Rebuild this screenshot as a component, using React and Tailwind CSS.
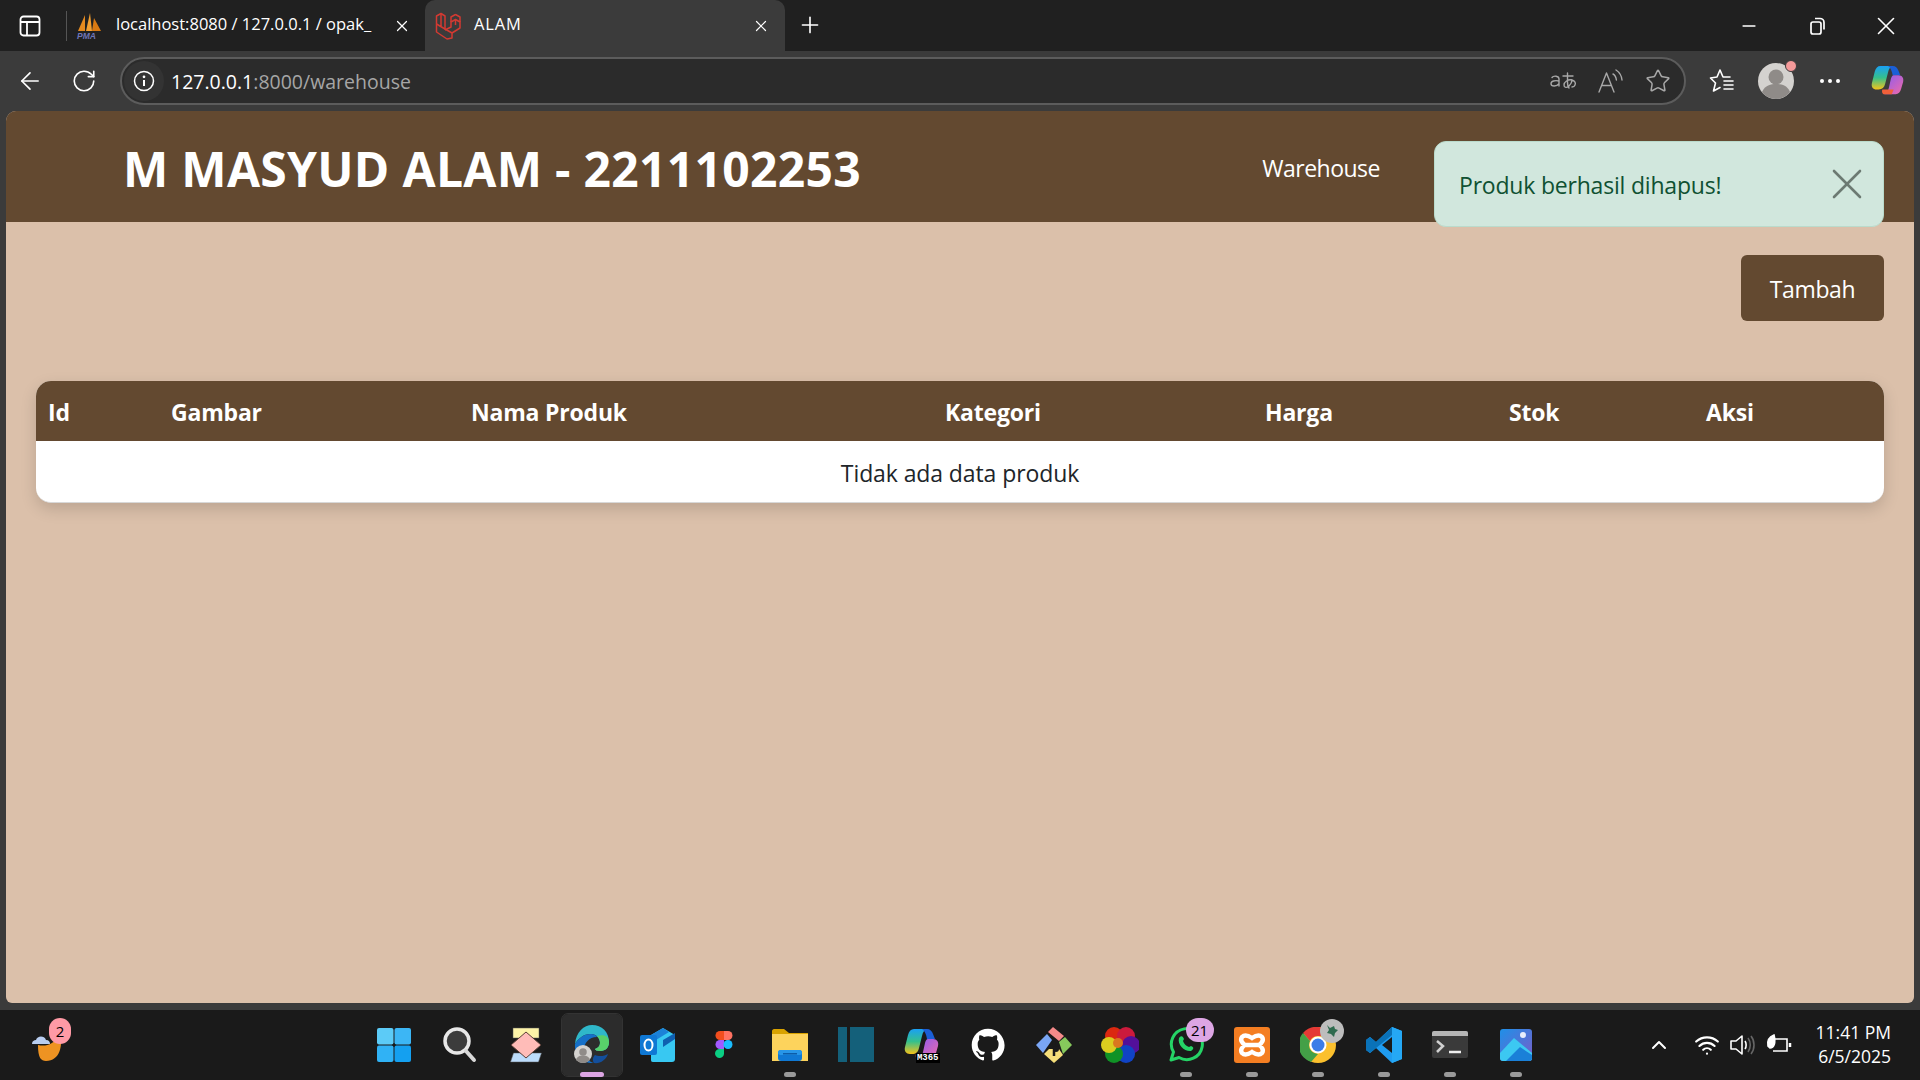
import React from 'react';
import { X, Plus, ArrowLeft, RotateCw, Star, Minus, ChevronUp, Wifi } from 'lucide-react';

const FONT = 'font-["Open_Sans","Noto_Sans",sans-serif]';

const columns = [
    { label: 'Id', width: 'w-[123px]' },
    { label: 'Gambar', width: 'w-[300px]' },
    { label: 'Nama Produk', width: 'w-[474px]' },
    { label: 'Kategori', width: 'w-[320px]' },
    { label: 'Harga', width: 'w-[244px]' },
    { label: 'Stok', width: 'w-[197px]' },
    { label: 'Aksi', width: 'w-[190px]' },
];

const PanelIcon = () => (
    <svg width="22" height="22" viewBox="0 0 22 22" fill="none" stroke="#fff" strokeWidth="1.8">
        <rect x="1.5" y="1.5" width="19" height="19" rx="3" />
        <path d="M1.5 7h19M8 7v13.5" />
    </svg>
);

const PmaIcon = () => (
    <svg width="26" height="28" viewBox="0 0 26 28">
        <path d="M2 19 L9 3 L9 19Z" fill="#e58a1f" />
        <path d="M10 19 L14 1 L16 19Z" fill="#f3a032" />
        <path d="M16 19 L18 6 L25 19Z" fill="#d97a12" />
        <text x="1" y="27" fontSize="8.5" fontWeight="700" fontStyle="italic" fill="#6f75b8" fontFamily="Liberation Sans">PMA</text>
    </svg>
);

const LaravelIcon = () => (
    <svg width="26" height="28" viewBox="0 0 26 28" fill="none" stroke="#d33a32" strokeWidth="1.5" strokeLinejoin="round">
        <path d="M1.5 4 L6 1.5 L10 4 V17 L17 21 V26 L12 27 L1.5 20Z" />
        <path d="M10 17 L1.5 12 M6 1.5 V15 M17 21 L25 16 V10 L20.5 7.5 L16 10 V15 L10 18" />
        <path d="M20.5 2.5 L25 5 V10 M20.5 2.5 L16 5 V10 M20.5 7.5 V13" />
    </svg>
);

const TranslateIcon = () => (
    <svg width="28" height="24" viewBox="0 0 28 24" fill="none" stroke="#a8a8a8" strokeWidth="1.4" strokeLinecap="round">
        <path d="M3 8.5c1.5-2 7-2 7 1.5v7M10 12c-4-1-8 0-8 2.7 0 3 6 3 8 0" />
        <path d="M14 7h10M18.5 4v9c0 3 .5 5 1.5 6M23 11c-4-1-8 2-8 5 0 3 3 3 5 1 2-2 3-4 3-6 3 1 4 3 3 5-.5 1.5-2 2-3 2" />
    </svg>
);

const ReadAloudIcon = () => (
    <svg width="28" height="26" viewBox="0 0 28 26" fill="none" stroke="#a8a8a8" strokeWidth="1.4" strokeLinecap="round" strokeLinejoin="round">
        <path d="M2 24 L9.5 5 L17 24M4.8 17.5h9.4" />
        <path d="M16 6c2 1 3 3 3.4 6M19 2c3 2 5.5 5 6 10" />
    </svg>
);

const FavoritesIcon = () => (
    <svg width="26" height="26" viewBox="0 0 26 26" fill="none" stroke="#fff" strokeWidth="1.6" strokeLinejoin="round" strokeLinecap="round">
        <path d="M11 2 L14 9 H21 M11 2 L8 9 L1.5 10 L6.5 15 L4.5 23 L11 19.5" />
        <path d="M15 13h9M15 17h9M15 21h9" />
    </svg>
);

const Avatar = ({ size = 36 }) => (
    <svg width={size} height={size} viewBox="0 0 36 36">
        <circle cx="18" cy="18" r="18" fill="#d4d2cf" />
        <circle cx="18" cy="14" r="7.5" fill="#8f8b88" />
        <path d="M4 29c3-7 9-8 14-8s11 1 14 8c-3 4-8 7-14 7S7 33 4 29Z" fill="#8f8b88" />
    </svg>
);

const CopilotIcon = ({ size = 36, id = 'cp' }) => (
    <svg width={size} height={size} viewBox="0 0 36 36">
        <defs>
            <linearGradient id={`${id}a`} x1="0" y1="0" x2="0" y2="1">
                <stop offset="0" stopColor="#1aa0f5" />
                <stop offset="0.5" stopColor="#35c08c" />
                <stop offset="1" stopColor="#f5c21a" />
            </linearGradient>
            <linearGradient id={`${id}b`} x1="0" y1="0" x2="1" y2="1">
                <stop offset="0" stopColor="#8a5cf0" />
                <stop offset="1" stopColor="#f06aa8" />
            </linearGradient>
        </defs>
        <path d="M10 2h13c-3 1-4 3-5 7l-3 12c-1 4-3 6-7 6H6c-4 0-6-3-5-7l3-12C5 4 7 2 10 2Z" fill={`url(#${id}a)`} />
        <path d="M18 2h5c3 0 5 2 6 5l2 5h-8c-1-5-2-8-5-10Z" fill="#1b5fd6" />
        <path d="M24 12h5c4 0 6 3 5 7l-2 7c-1 4-3 6-6 6H14c3-1 4-3 5-7l2-9c.5-2 1.500-4 3-4Z" fill={`url(#${id}b)`} />
        <path d="M12 27h12l-2 5H14c-1.500 0-3-2-2-5Z" fill="#f0603a" />
    </svg>
);

const WeatherIcon = () => (
    <svg width="38" height="38" viewBox="0 0 38 38">
        <path d="M8 20c8 2 16-1 22-10 3 10 0 26-14 26-5 0-8-3-8-16Z" fill="#ee9322" transform="translate(0 1)" />
        <path d="M2 20c0-3 2-4 4-4 1-4 8-5 10 0 3 0 4 2 4 4Z" fill="#b8cdf0" />
    </svg>
);

const StartIcon = () => (
    <svg width="36" height="36" viewBox="0 0 36 36">
        <rect x="1" y="1" width="16.500" height="16.500" rx="2" fill="#5ccbf7" />
        <rect x="18.500" y="1" width="16.500" height="16.500" rx="2" fill="#3cb6f5" />
        <rect x="1" y="18.500" width="16.500" height="16.500" rx="2" fill="#30b2f5" />
        <rect x="18.500" y="18.500" width="16.500" height="16.500" rx="2" fill="#14a0f0" />
    </svg>
);

const SearchIcon = () => (
    <svg width="36" height="38" viewBox="0 0 36 38" fill="none">
        <circle cx="15" cy="15" r="12" fill="#3c3c3c" stroke="#e8e8e8" strokeWidth="3.500" />
        <path d="M24 25 L32 34" stroke="#d8d8d8" strokeWidth="4" strokeLinecap="round" />
    </svg>
);

const WidgetsIcon = () => (
    <svg width="34" height="36" viewBox="0 0 34 36">
        <rect x="4" y="1" width="26" height="10" fill="#fdf3a8" stroke="#555" strokeWidth="0.500" />
        <path d="M3 27h28l-3 9H0Z" fill="#bcdcfb" stroke="#555" strokeWidth="0.500" transform="translate(1.500 -1)" />
        <path d="M17 5 L32 18 L17 31 L2 18Z" fill="#ffbcb8" stroke="#5a4038" strokeWidth="1" />
    </svg>
);

const EdgeIcon = () => (
    <div className="relative w-[36px] h-[42px]">
        <svg width="36" height="42" viewBox="0 0 36 42">
            <path d="M1 20C2 8 10 1 18 1c10 0 17 7 17 17 0 7-5 9-9 9-3 0-5-1-5-2 3-1 5-3 5-6 0-5-4-9-9-9-8 0-13 5-16 10Z" fill="#2fb7c9" />
            <path d="M35 18c0 7-5 9-9 9-3 0-5-1-5-2 3-1 5-3 5-6 0-3-1-5-3-7 8-2 12 1 12 6Z" fill="#58d06a" />
            <path d="M1 20c3-5 8-10 16-10 3 0 5 1 6 3-8 0-13 6-13 13 0 7 5 12 10 13C10 40 0 33 1 20Z" fill="#1670c8" />
            <path d="M20 39c6 1 12-3 14-9-3 2-9 3-13 1-2 2-3 5-1 8Z" fill="#134f9c" />
        </svg>
        <div className="absolute left-[0px] bottom-[3px]"><Avatar size={18} /></div>
    </div>
);

const OutlookIcon = () => (
    <svg width="38" height="36" viewBox="0 0 38 36">
        <path d="M12 8 L24 1 L36 8 V32c0 2-1 3-3 3H14c-2 0-2-1-2-3Z" fill="#38c8f2" />
        <path d="M12 8 L24 1 L30 5 L12 16Z" fill="#1c82d8" />
        <path d="M24 13 L36 6 V12 L24 20Z" fill="#0f5fb0" />
        <rect x="1" y="8" width="17" height="20" rx="2" fill="#0f78d4" />
        <ellipse cx="9.500" cy="18" rx="4" ry="5.500" fill="none" stroke="#fff" strokeWidth="2" />
    </svg>
);

const FigmaIcon = () => (
    <svg width="18" height="30" viewBox="0 0 18 30">
        <path d="M5 1h4v9H5a4.500 4.500 0 0 1 0-9Z" fill="#f24e1e" />
        <path d="M9 1h4a4.500 4.500 0 0 1 0 9H9Z" fill="#ff7262" />
        <path d="M5 10h4v9H5a4.500 4.500 0 0 1 0-9Z" fill="#a259ff" />
        <circle cx="13" cy="14.500" r="4.500" fill="#1abcfe" />
        <path d="M5 19h4v5a4.500 4.500 0 1 1-4-5Z" fill="#0acf83" />
    </svg>
);

const FolderIcon = () => (
    <svg width="36" height="34" viewBox="0 0 36 34">
        <path d="M0 3c0-1 1-2 2-2h10l5 4h19v6H0Z" fill="#d9a200" />
        <path d="M0 6h36v27H0Z" fill="#fdd35c" />
        <rect x="6" y="22" width="24" height="11" rx="3" fill="#0f78d4" />
        <rect x="6" y="22" width="24" height="5" rx="2.500" fill="#2796e8" />
        <rect x="11" y="25" width="14" height="1.500" fill="#0c5ca8" />
    </svg>
);

const PanelAppIcon = () => (
    <svg width="36" height="36" viewBox="0 0 36 36">
        <rect x="0" y="0" width="9" height="35" fill="#14607a" />
        <rect x="12" y="0" width="24" height="35" fill="#14607a" />
    </svg>
);

const M365Icon = () => (
    <div className="relative w-[36px] h-[36px]">
        <CopilotIcon size={36} id="m365" />
        <span className='absolute right-[0px] bottom-[0px] bg-black text-white text-[9px] leading-[10px] font-bold px-[1px] font-["Liberation_Mono",monospace]'>M365</span>
    </div>
);

const GithubIcon = () => (
    <svg width="34" height="34" viewBox="0 0 24 24" fill="#fff">
        <path d="M12 .5C5.650.5.500 5.650.500 12c0 5.100 3.300 9.400 7.900 10.900.6.100.8-.3.8-.6v-2c-3.200.7-3.900-1.500-3.900-1.500-.5-1.300-1.300-1.700-1.300-1.700-1-.7.100-.7.100-.7 1.200.1 1.800 1.200 1.800 1.200 1 1.800 2.700 1.300 3.400 1 .1-.8.400-1.300.7-1.600-2.600-.3-5.300-1.300-5.300-5.700 0-1.300.5-2.300 1.200-3.100-.1-.3-.5-1.500.1-3.100 0 0 1-.3 3.200 1.200a11 11 0 0 1 5.800 0c2.200-1.500 3.200-1.200 3.200-1.200.6 1.600.2 2.800.1 3.100.8.800 1.200 1.800 1.200 3.100 0 4.400-2.700 5.400-5.300 5.700.4.400.8 1.100.8 2.200v3.200c0 .3.200.7.800.6 4.600-1.500 7.900-5.800 7.900-10.900C23.500 5.650 18.350.5 12 .5Z" />
    </svg>
);

const GitKrakenIcon = () => (
    <svg width="38" height="38" viewBox="0 0 38 38">
        <path d="M13 6 L18 1 L29 10 L24 15Z" fill="#f58a8a" />
        <path d="M1 19 L12 8 L17 14 L8 27Z" fill="#7aa6f5" />
        <path d="M24 16 L30 11 L37 19 L28 28Z" fill="#86c95c" />
        <path d="M9 28 L14 23 L24 23 L28 29 L19 37Z" fill="#f5de7a" />
        <path d="M19 12 L19 30" stroke="#1a1a1a" strokeWidth="2.500" />
        <circle cx="21" cy="23" r="3" fill="#1a1a1a" />
    </svg>
);

const PhotosIcon = () => (
    <svg width="38" height="38" viewBox="0 0 38 38">
        <g opacity="0.9">
            <circle cx="13" cy="10" r="9" fill="#f02a10" />
            <circle cx="25" cy="10" r="9" fill="#e01a40" />
            <circle cx="30" cy="19" r="9" fill="#5a10a8" />
            <circle cx="25" cy="28" r="9" fill="#1048d8" />
            <circle cx="13" cy="28" r="9" fill="#10a028" />
            <circle cx="8" cy="19" r="8" fill="#f0e020" />
            <circle cx="17" cy="17" r="5" fill="#f08020" />
        </g>
    </svg>
);

const WhatsappIcon = () => (
    <div className="relative w-[36px] h-[36px]">
        <svg width="36" height="36" viewBox="0 0 36 36" fill="none">
            <path d="M3 33 L5.500 25A15.500 15.500 0 1 1 11 30.500Z" stroke="#25d366" strokeWidth="3" strokeLinejoin="round" />
            <path d="M11 11c2-3 4-2 5 1l-1 2c1 3 3 5 6 6l2-1c3 1 3 3 0 5-6 1-14-6-12-13Z" fill="#25d366" />
        </svg>
        <span className='absolute right-[-10px] top-[-9px] w-[28px] h-[24px] rounded-full bg-[#dda6e4] text-black text-[15px] leading-[24px] text-center font-["Open_Sans",sans-serif]'>21</span>
    </div>
);

const XamppIcon = () => (
    <div className="flex items-center justify-center w-[36px] h-[36px] rounded-[3px] bg-[#f47e22]">
        <svg width="30" height="26" viewBox="0 0 30 26" fill="none" stroke="#fff" strokeWidth="4.500">
            <path d="M5 5c3-3 7-1 10 1 3-2 7-4 10-1 2 3 0 6-3 8 3 2 5 5 3 8-3 3-7 1-10-1-3 2-7 4-10 1-2-3 0-6 3-8-3-2-5-5-3-8Z" />
            <path d="M9 13h12" />
        </svg>
    </div>
);

const ChromeIcon = () => (
    <div className="relative w-[36px] h-[36px]">
        <svg width="36" height="36" viewBox="0 0 36 36">
            <circle cx="18" cy="18" r="18" fill="#fbc02d" />
            <path d="M18 0a18 18 0 0 1 15.600 9H18a9 9 0 0 0-8 5L3 6a18 18 0 0 1 15-6Z" fill="#e53935" />
            <path d="M3 6 L10 14a9 9 0 0 0 8 13 L11 35A18 18 0 0 1 3 6Z" fill="#43a047" />
            <circle cx="18" cy="18" r="8.500" fill="#fff" />
            <circle cx="18" cy="18" r="6.500" fill="#3b7de8" />
        </svg>
        <div className="absolute right-[-8px] top-[-8px] w-[24px] h-[24px] rounded-full bg-[#bdbdbd] flex items-center justify-center">
            <svg width="14" height="14" viewBox="0 0 14 14"><path d="M2 1l3 3 4-2 1 3 3 1-3 3-1 4-3-3-4-1 2-3Z" fill="#2f6b4f" /></svg>
        </div>
    </div>
);

const VscodeIcon = () => (
    <svg width="36" height="36" viewBox="0 0 36 36">
        <path d="M26 0 L36 4 V32 L26 36 L10 21 L4 26 L0 23 V13 L4 10 L10 15Z M26 10 L16 18 L26 26Z" fill="#1f9cf0" fillRule="evenodd" />
        <path d="M26 0 L36 4 V32 L26 36Z M26 10 L26 26" fill="#25a8f5" />
        <path d="M26 0 L10 15 L4 10 L0 13 V23 L4 26 L26 8Z" fill="#0a72b8" />
    </svg>
);

const TerminalIcon = () => (
    <svg width="36" height="28" viewBox="0 0 36 28" fill="none">
        <rect x="0" y="0" width="36" height="27" rx="2" fill="#3a3a3a" />
        <path d="M2 0h32a2 2 0 0 1 2 2v3H0V2a2 2 0 0 1 2-2Z" fill="#b5b5b5" />
        <path d="M5 10 L11 15 L5 21" stroke="#d0d0d0" strokeWidth="2.500" />
        <path d="M17 21h12" stroke="#eee" strokeWidth="2.500" />
    </svg>
);

const GalleryIcon = () => (
    <svg width="32" height="32" viewBox="0 0 32 32">
        <defs>
            <linearGradient id="gal" x1="0" y1="0" x2="1" y2="1">
                <stop offset="0" stopColor="#1e90e8" />
                <stop offset="1" stopColor="#7a5cc8" />
            </linearGradient>
        </defs>
        <rect width="32" height="32" rx="3" fill="url(#gal)" />
        <circle cx="23" cy="6" r="3" fill="#e8eefc" />
        <path d="M0 24 L14 9 L32 24 V29a3 3 0 0 1-3 3H3a3 3 0 0 1-3-3Z" fill="#3cc8f2" />
        <path d="M6 32 L20 18 L32 26 V29a3 3 0 0 1-3 3Z" fill="#1a80d8" />
    </svg>
);

const taskbarApps = [
    { key: 'start', icon: <StartIcon /> },
    { key: 'search', icon: <SearchIcon /> },
    { key: 'widgets', icon: <WidgetsIcon /> },
    { key: 'edge', icon: <EdgeIcon />, active: true },
    { key: 'outlook', icon: <OutlookIcon /> },
    { key: 'figma', icon: <FigmaIcon /> },
    { key: 'folder', icon: <FolderIcon />, open: true },
    { key: 'panel', icon: <PanelAppIcon /> },
    { key: 'm365', icon: <M365Icon /> },
    { key: 'github', icon: <GithubIcon /> },
    { key: 'gitkraken', icon: <GitKrakenIcon /> },
    { key: 'photos', icon: <PhotosIcon /> },
    { key: 'whatsapp', icon: <WhatsappIcon />, open: true },
    { key: 'xampp', icon: <XamppIcon />, open: true },
    { key: 'chrome', icon: <ChromeIcon />, open: true },
    { key: 'vscode', icon: <VscodeIcon />, open: true },
    { key: 'terminal', icon: <TerminalIcon />, open: true },
    { key: 'gallery', icon: <GalleryIcon />, open: true },
];

const TabBar = () => (
    <div className="flex items-end h-[51px] bg-[#202020] text-white text-[16.500px]">
        <div className="flex items-center w-[66px] h-[51px] pl-[19px]"><PanelIcon /></div>
        <div className="self-center w-px h-[30px] bg-[#555]" />
        <div className="flex items-center w-[358px] h-[51px] pl-[9px]">
            <PmaIcon />
            <span className="ml-[14px] -mt-[2px] w-[263px] whitespace-nowrap">localhost:8080 / 127.0.0.1 / opak_</span>
            <X className="ml-[14px] w-[18px] h-[18px]" strokeWidth={1.6} />
        </div>
        <div className="flex items-center w-[360px] h-[51px] pl-[10px] pr-[15px] bg-[#3b3b3b] rounded-t-[10px]">
            <LaravelIcon />
            <span className="ml-[13px] -mt-[2px] tracking-[0.8px]">ALAM</span>
            <X className="ml-auto w-[18px] h-[18px]" strokeWidth={1.6} />
        </div>
        <div className="flex items-center justify-center w-[50px] h-[51px] pb-[2px]"><Plus className="w-[26px] h-[26px]" strokeWidth={1.5} /></div>
        <div className="flex items-center ml-auto h-[51px]">
            <div className="flex items-center justify-center w-[69px]"><Minus className="w-[20px] h-[20px]" strokeWidth={2} /></div>
            <div className="flex items-center justify-center w-[69px]">
                <svg width="18" height="20" viewBox="0 0 18 20" fill="none" stroke="#fff" strokeWidth="1.700">
                    <rect x="2" y="6" width="10" height="12" rx="2" />
                    <path d="M6 2.500h5a4 4 0 0 1 4 4v7" />
                </svg>
            </div>
            <div className="flex items-center justify-center w-[68px]"><X className="w-[30px] h-[30px]" strokeWidth={1.3} /></div>
        </div>
    </div>
);

const Toolbar = () => (
    <div className="flex items-center h-[60px] bg-[#3b3b3b] text-white">
        <div className="flex items-center justify-center w-[60px]"><ArrowLeft className="w-[28px] h-[28px]" strokeWidth={1.4} /></div>
        <div className="flex items-center justify-center w-[48px]"><RotateCw className="w-[26px] h-[26px]" strokeWidth={1.5} /></div>
        <div className="flex items-center ml-[12px] w-[1566px] h-[48px] rounded-full border-2 border-[#5c5c5c] bg-[#2b2b2b] pl-[2px] pr-[13px]">
            <div className="flex items-center justify-center w-[40px] h-[40px] rounded-full bg-[#333333]">
                <svg width="22" height="22" viewBox="0 0 22 22" fill="none" stroke="#fff" strokeWidth="1.500">
                    <circle cx="11" cy="11" r="9.500" />
                    <path d="M11 10v6" strokeWidth="2" />
                    <circle cx="11" cy="6.800" r="0.600" fill="#fff" />
                </svg>
            </div>
            <span className="ml-[7px] mt-[1px] text-[19.500px] text-white">127.0.0.1<span className="text-[#a6a6a6]">:8000/warehouse</span></span>
            <div className="flex items-center ml-auto gap-[20px]">
                <TranslateIcon />
                <ReadAloudIcon />
                <Star className="w-[26px] h-[26px] text-[#a8a8a8]" strokeWidth={1.4} />
            </div>
        </div>
        <div className="flex items-center justify-center ml-[19px] w-[34px]"><FavoritesIcon /></div>
        <div className="relative ml-[19px] w-[36px] h-[36px]">
            <Avatar />
            <span className="absolute right-[-3px] top-[-3px] w-[12px] h-[12px] rounded-full bg-[#f59a9a] border border-[#3b3b3b]" />
        </div>
        <div className="flex items-center justify-center gap-[4px] ml-[26px] w-[20px]">
            <span className="w-[4px] h-[4px] shrink-0 rounded-full bg-white" />
            <span className="w-[4px] h-[4px] shrink-0 rounded-full bg-white" />
            <span className="w-[4px] h-[4px] shrink-0 rounded-full bg-white" />
        </div>
        <div className="ml-[31px]"><CopilotIcon size={34} /></div>
    </div>
);

const WarehousePage = () => (
    <div className="relative flex-1 mx-[6px] rounded-t-[10px] rounded-b-[6px] overflow-hidden bg-[#dbc0aa]">
        <nav className="flex items-center h-[111px] pl-[117px] bg-[#634930] text-white">
            <h1 className="mt-[4px] text-[48px] font-bold tracking-[0.3px]">M MASYUD ALAM - 2211102253</h1>
            <a className="ml-auto mt-[4px] mr-[534px] text-[23px] tracking-[-0.5px]">Warehouse</a>
        </nav>

        {/* Toast */}
        <div className="absolute top-[30px] right-[30px] flex items-center justify-between w-[450px] h-[86px] pl-[24px] pr-[10px] rounded-[12px] border border-[#badbcc] bg-[#d1e7dd] text-[#0f5132] text-[23px] tracking-[-0.2px]">
            <span className="mt-[3px]">Produk berhasil dihapus!</span>
            <X className="w-[52px] h-[52px] text-[#6c7a72]" strokeWidth={1.2} />
        </div>

        <div className="flex justify-end pt-[33px] pr-[30px]">
            <button className="w-[143px] h-[66px] rounded-[6px] bg-[#634930] text-white text-[23px] tracking-[-0.4px] pt-[2px]">Tambah</button>
        </div>

        <div className="mt-[60px] ml-[30px] mr-[30px] rounded-[15px] overflow-hidden bg-white shadow-[0_6px_16px_rgba(0,0,0,0.15)] border-b border-[#d8d8d8]">
            <table className="w-full table-fixed">
                <thead className="bg-[#634930] text-white">
                    <tr className="h-[60px]">
                        {columns.map((col) => (
                            <th key={col.label} className={`${col.width} px-[12px] pt-[2px] text-left text-[23px] tracking-[-0.2px] font-bold`}>{col.label}</th>
                        ))}
                    </tr>
                </thead>
                <tbody>
                    <tr className="h-[61px]">
                        <td colSpan="7" className="pt-[3px] text-center text-[23px] tracking-[-0.1px] text-[#212529]">Tidak ada data produk</td>
                    </tr>
                </tbody>
            </table>
        </div>
    </div>
);

const Taskbar = () => (
    <div className="relative flex items-center justify-center h-[70px] mt-[7px] bg-[#1a1a1a] text-white">
        <div className="absolute left-[30px] top-[14px]">
            <WeatherIcon />
            <span className="absolute left-[19px] top-[-6px] w-[22px] h-[26px] rounded-full bg-[#ff9aa6] text-black text-[15px] leading-[26px] text-center">2</span>
        </div>

        <div className="flex items-center ml-[-11px]">
            {taskbarApps.map((app) => (
                <div key={app.key} className={`relative flex items-center justify-center h-[62px] ${app.active ? 'w-[60px] mx-[3px] rounded-[6px] bg-[#2c2c2c] outline outline-1 outline-[#333]' : 'w-[66px]'}`}>
                    {app.icon}
                    {app.open && <span className="absolute bottom-[-1px] left-[27px] w-[12px] h-[5px] rounded-full bg-[#9a9a9a]" />}
                    {app.active && <span className="absolute bottom-[-1px] left-[18px] w-[24px] h-[5px] rounded-full bg-[#dda6e4]" />}
                </div>
            ))}
        </div>

        {/* Tray */}
        <div className="absolute right-[29px] top-0 h-full flex items-center">
            <ChevronUp className="w-[24px] h-[24px]" strokeWidth={2} />
            <Wifi className="ml-[23px] w-[26px] h-[26px]" strokeWidth={2} />
            <svg className="ml-[9px]" width="26" height="24" viewBox="0 0 26 24" fill="none" stroke="#fff" strokeWidth="1.600" strokeLinejoin="round">
                <path d="M2 8h5l6-5v18l-6-5H2Z" />
                <path d="M16 8c1.500 2 1.500 6 0 8" />
                <path d="M19 5c3 4 3 10 0 14M22 3c4 5 4 13 0 18" stroke="#666" />
            </svg>
            <svg className="ml-[10px]" width="28" height="24" viewBox="0 0 28 24" fill="none" stroke="#fff" strokeWidth="1.600">
                <path d="M10 6h12v12H8" />
                <path d="M25 10v4" strokeWidth="2.500" />
                <path d="M9 2c-5 2-7 6-6 11l2 2c4 0 6-5 4-13Z" fill="#fff" />
            </svg>
            <div className="ml-[23px] -mt-[3px] text-right text-[17.500px] leading-[24px]">
                <div>11:41 PM</div>
                <div>6/5/2025</div>
            </div>
        </div>
    </div>
);

const App = () => {
    return (
        <div className={`flex flex-col w-[1920px] h-[1080px] overflow-hidden bg-[#3b3b3b] ${FONT}`}>
            <TabBar />
            <Toolbar />
            <WarehousePage />
            <Taskbar />
        </div>
    );
};

export default App;
